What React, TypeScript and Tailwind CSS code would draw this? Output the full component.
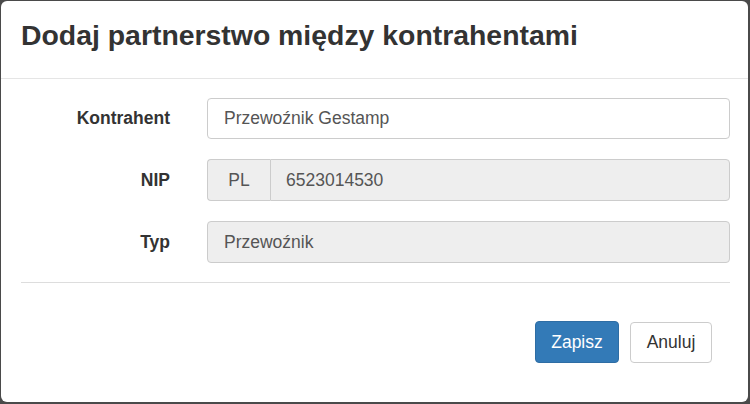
import React from "react";

export default function App() {
  return (
    <div className="w-[750px] h-[404px] bg-[#4a4a4a] pt-px pl-px overflow-hidden" style={{ fontFamily: '"Liberation Sans", Arial, sans-serif' }}>
      <div className="w-[747px] h-[401px] bg-white rounded-[6px] flex flex-col">
        <div className="h-[78px] border-b border-[#e5e5e5] px-5 pt-[18px] shrink-0">
          <h4 className="text-[28.4px] leading-[32px] font-bold text-[#333]">Dodaj partnerstwo między kontrahentami</h4>
        </div>
        <div className="pl-5 pr-[18px] pt-[19px] flex flex-col gap-[20px]">
          <div className="flex items-center h-[41px]">
            <label className="w-[149px] text-right font-bold text-[17.5px] text-[#333]">Kontrahent</label>
            <div className="ml-[37px] flex-1 h-full border border-[#ccc] rounded-[4px] bg-white px-4 flex items-center text-[17.5px] text-[#555]">Przewoźnik Gestamp</div>
          </div>
          <div className="flex items-center h-[42px]">
            <label className="w-[149px] text-right font-bold text-[17.5px] text-[#333]">NIP</label>
            <div className="ml-[37px] flex-1 h-full flex">
              <div className="w-[63px] h-full border border-r-0 border-[#ccc] rounded-l-[4px] bg-[#eee] flex items-center justify-center text-[17.5px] text-[#555]">PL</div>
              <div className="flex-1 h-full border border-[#ccc] rounded-r-[4px] bg-[#eee] px-[15px] flex items-center text-[17.5px] text-[#555]">6523014530</div>
            </div>
          </div>
          <div className="flex items-center h-[42px]">
            <label className="w-[149px] text-right font-bold text-[17.5px] text-[#333]">Typ</label>
            <div className="ml-[37px] flex-1 h-full border border-[#ccc] rounded-[4px] bg-[#eee] px-4 flex items-center text-[17.5px] text-[#555]">Przewoźnik</div>
          </div>
          <div className="h-px bg-[#ddd] -mt-px" />
        </div>
        <div className="flex justify-end gap-[11px] pr-[36px] pt-[38px]">
          <button className="w-[84px] h-[42px] rounded-[4px] bg-[#337ab7] border border-[#2e6da4] text-white text-[17.5px]">Zapisz</button>
          <button className="w-[82px] h-[41px] mt-px rounded-[4px] bg-white border border-[#ccc] text-[#333] text-[17.5px]">Anuluj</button>
        </div>
      </div>
    </div>
  );
}
